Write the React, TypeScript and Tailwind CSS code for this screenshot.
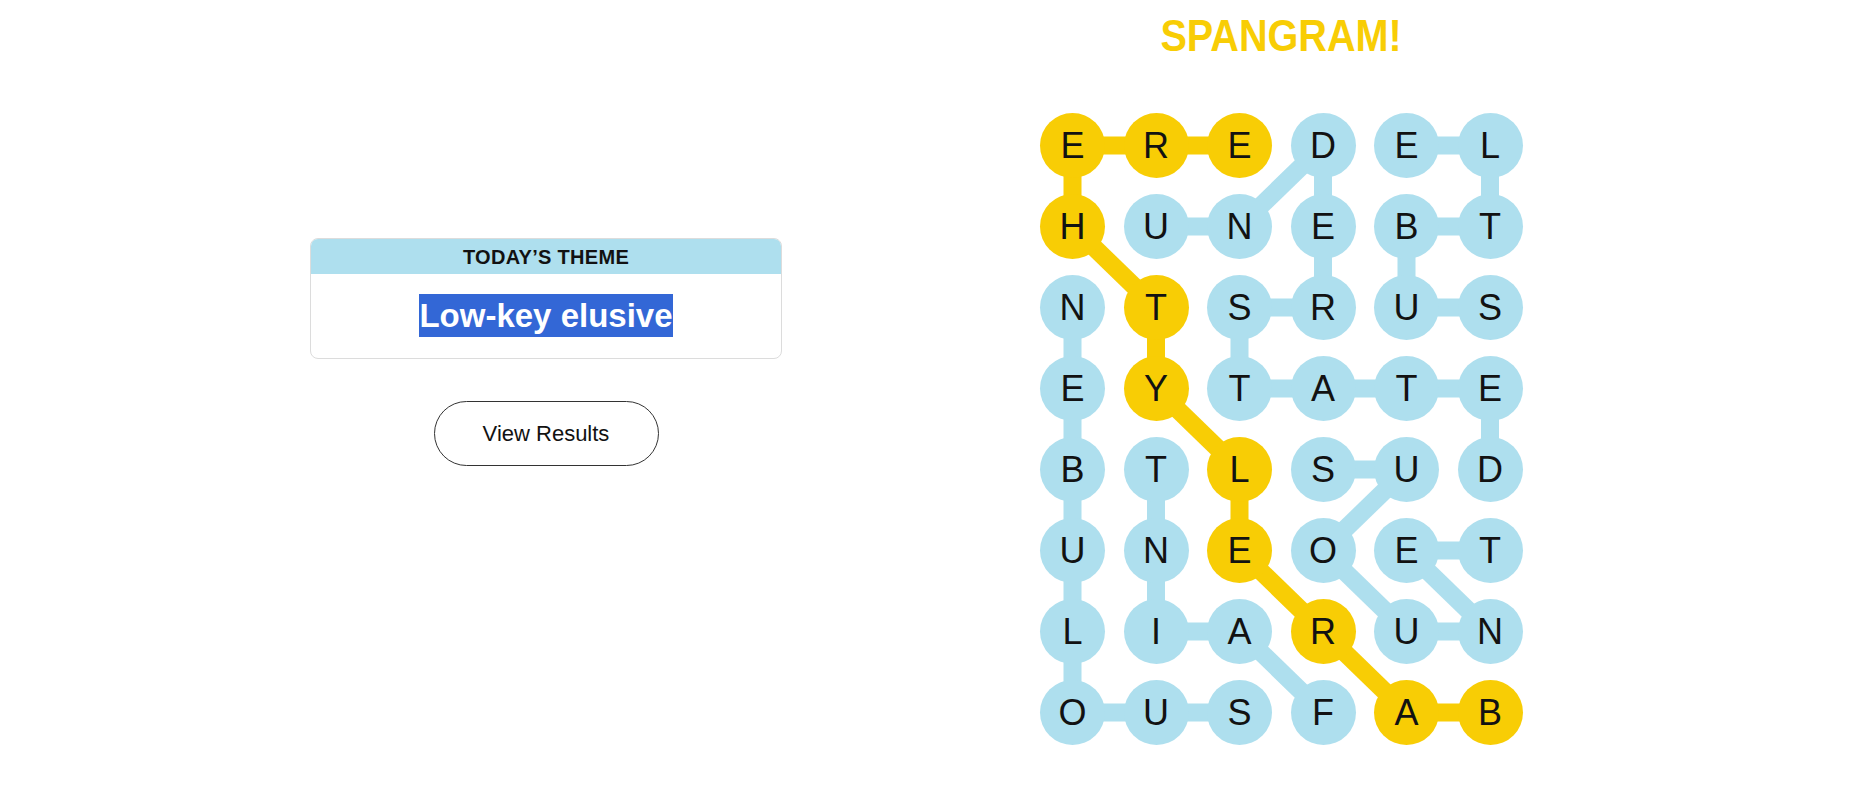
const BLUE = '#aedfee';
const YELLOW = '#f8cd05';

const board = ['EREDEL', 'HUNEBT', 'NTSRUS', 'EYTATE', 'BTLSUD', 'UNEOET', 'LIARUN', 'OUSFAB'];

type Cell = [number, number];

const words: { color: string; path: Cell[] }[] = [
  { color: YELLOW, path: [[7, 5], [7, 4], [6, 3], [5, 2], [4, 2], [3, 1], [2, 1], [1, 0], [0, 0], [0, 1], [0, 2]] },
  { color: BLUE, path: [[2, 0], [3, 0], [4, 0], [5, 0], [6, 0], [7, 0], [7, 1], [7, 2]] },
  { color: BLUE, path: [[1, 1], [1, 2], [0, 3], [1, 3], [2, 3], [2, 2], [3, 2], [3, 3], [3, 4], [3, 5], [4, 5]] },
  { color: BLUE, path: [[2, 5], [2, 4], [1, 4], [1, 5], [0, 5], [0, 4]] },
  { color: BLUE, path: [[5, 5], [5, 4], [6, 5], [6, 4], [5, 3], [4, 4], [4, 3]] },
  { color: BLUE, path: [[7, 3], [6, 2], [6, 1], [5, 1], [4, 1]] },
];

const COL = 83.5;
const ROW = 81;
const R = 32.5;

const cellColor: Record<string, string> = {};
words.forEach((w) => w.path.forEach(([r, c]) => (cellColor[`${r}-${c}`] = w.color)));

function Connectors() {
  return (
    <svg className="absolute inset-0" width="100%" height="100%">
      {words.map((w, i) =>
        w.path.slice(1).map(([r, c], j) => {
          const [pr, pc] = w.path[j];
          return (
            <line
              key={`${i}-${j}`}
              x1={R + pc * COL}
              y1={R + pr * ROW}
              x2={R + c * COL}
              y2={R + r * ROW}
              stroke={w.color}
              strokeWidth={18}
            />
          );
        }),
      )}
    </svg>
  );
}

function Board() {
  return (
    <div className="relative grid grid-cols-[repeat(6,65px)] gap-x-[18.5px] gap-y-[16px]">
      <Connectors />
      {board.flatMap((row, r) =>
        row.split('').map((ch, c) => (
          <div
            key={`${r}-${c}`}
            className="relative flex h-[65px] w-[65px] items-center justify-center rounded-full text-[36px] leading-none text-[#121212]"
            style={{ backgroundColor: cellColor[`${r}-${c}`] }}
          >
            {ch}
          </div>
        )),
      )}
    </div>
  );
}

export default function App() {
  return (
    <div className="flex min-h-[790px] w-[1854px] bg-white font-['Liberation_Sans',Arial,sans-serif] text-[#121212]">
      <div className="w-[1040px] pl-[310px] pt-[238px]">
        <div className="flex w-[472px] flex-col items-center">
          <div className="w-full overflow-hidden rounded-[8px] border border-[#dcdcdc]">
            <div className="flex h-[35px] items-center justify-center bg-[#aedfee] text-[20px] font-bold tracking-[0.3px]">
              TODAY’S THEME
            </div>
            <div className="flex justify-center pb-[21px] pt-[20px]">
              <span className="inline-block h-[43px] bg-[#3367d6] text-[33px] font-bold leading-[43px] text-white">
                Low-key elusive
              </span>
            </div>
          </div>
          <button className="mt-[42px] h-[65px] w-[225px] rounded-full border border-[#333333] bg-white text-[22px]">
            View Results
          </button>
        </div>
      </div>
      <div className="flex w-[482.5px] flex-col items-center">
        <h1 className="mt-[12px] h-[48px] scale-x-[0.9] text-[44px] font-bold leading-[48px] text-[#f8cd05]">
          SPANGRAM!
        </h1>
        <div className="mt-[53px]">
          <Board />
        </div>
      </div>
    </div>
  );
}
